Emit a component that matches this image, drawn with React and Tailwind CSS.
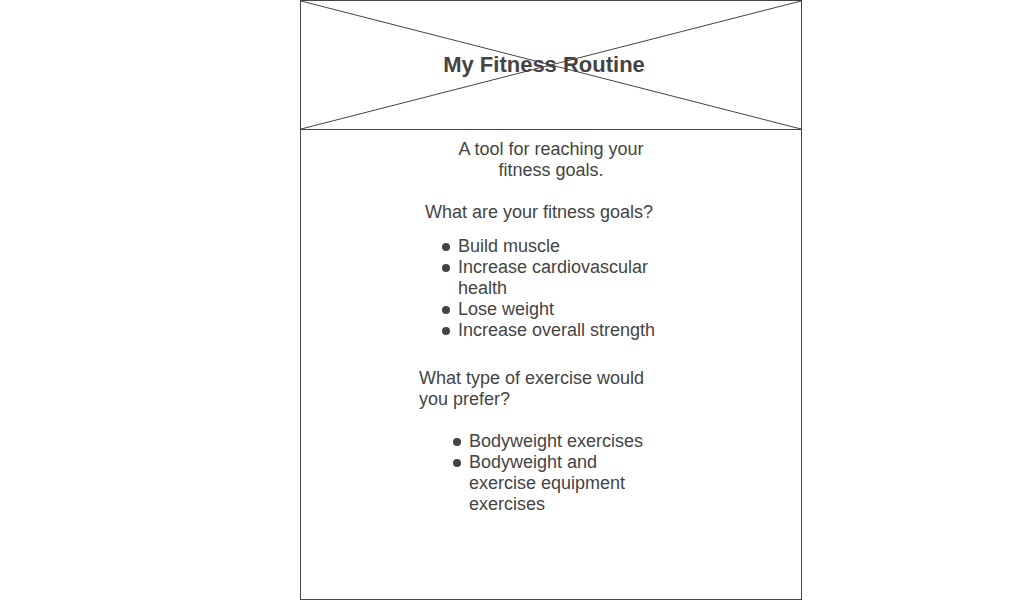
function BulletList({ items, className }) {
  return (
    <ul className={className}>
      {items.map((item) => (
        <li key={item} className="flex gap-2">
          <span aria-hidden="true" className="mt-[7px] size-2 shrink-0 rounded-full bg-[#444]" />
          <span>{item}</span>
        </li>
      ))}
    </ul>
  );
}

const goals = [
  "Build muscle",
  "Increase cardiovascular health",
  "Lose weight",
  "Increase overall strength",
];

const exerciseTypes = ["Bodyweight exercises", "Bodyweight and exercise equipment exercises"];

export default function App() {
  return (
    <div className="flex min-h-screen bg-white pl-[300px] font-['Liberation_Sans',Arial,sans-serif] text-[18px] leading-[21px] text-[#444]">
      <main className="w-full max-w-[502px] border border-[#444] pb-20">
        <header className="relative border-b border-[#444] py-[51px] pr-3.5 text-center">
          <svg
            aria-hidden="true"
            className="absolute inset-0 size-full"
            viewBox="0 0 500 128"
            preserveAspectRatio="none"
            fill="none"
            stroke="#444"
          >
            <path d="M0 0L500 128M0 128L500 0" vectorEffect="non-scaling-stroke" />
          </svg>
          <h1 className="relative text-[22px] leading-[26px] font-bold">My Fitness Routine</h1>
        </header>
        <p className="mx-auto mt-[9px] max-w-[200px] text-center">A tool for reaching your fitness goals.</p>
        <section className="mt-[21px]">
          <h2 className="pl-[124px]">What are your fitness goals?</h2>
          <BulletList items={goals} className="mt-[13px] max-w-[364px] pl-[141px]" />
        </section>
        <section className="mt-[27px]">
          <h2 className="max-w-[364px] pl-[118px]">What type of exercise would you prefer?</h2>
          <BulletList items={exerciseTypes} className="mt-[21px] max-w-[350px] pl-[152px]" />
        </section>
      </main>
    </div>
  );
}
